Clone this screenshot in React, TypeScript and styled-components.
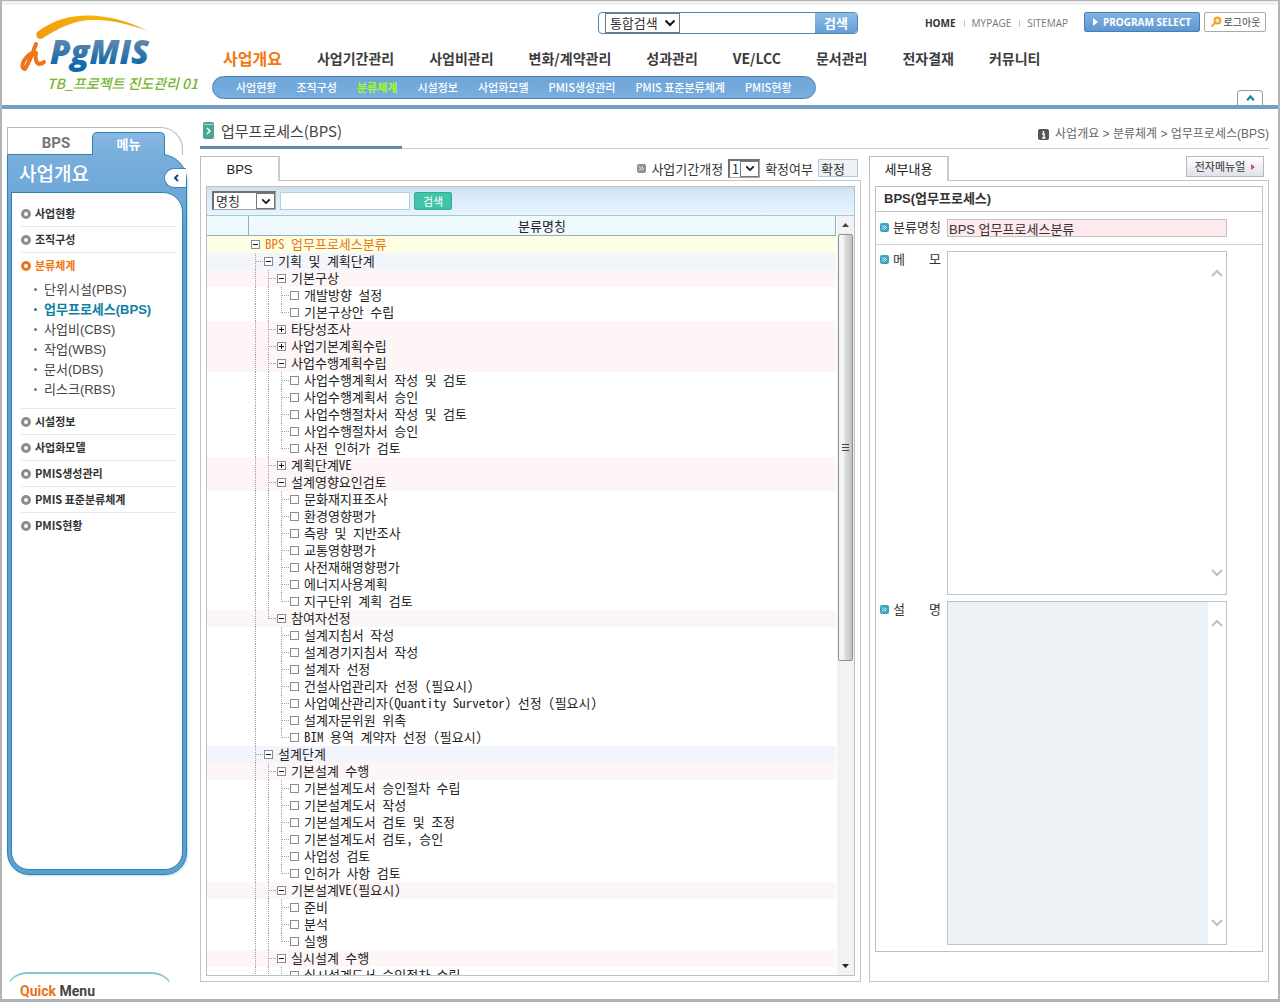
import React from "react";
import styled, { createGlobalStyle, css } from "styled-components";

const gulim = `"Noto Sans Mono CJK KR", "Noto Sans CJK KR", monospace`;
const dotum = `"Liberation Sans", "Noto Sans CJK KR", sans-serif`;
const gothic = `"Noto Sans CJK KR", "Liberation Sans", sans-serif`;

const Global = createGlobalStyle`
  *, *::before, *::after { box-sizing: border-box; }
  body { margin: 0; background: #fff; color: #333; font: 13px/17px ${dotum}; }
  button, input, select, textarea { font: inherit; color: inherit; margin: 0; }
  button { padding: 0; border: 0; background: none; cursor: pointer; }
  a { color: inherit; text-decoration: none; }
  ul, ol { list-style: none; margin: 0; padding: 0; }
  h1, h2, h3, p { margin: 0; font: inherit; }
`;

const Frame = styled.div`
  height: 100vh;
  min-height: 640px;
  display: flex;
  flex-direction: column;
  border: solid #b4b4b4;
  border-width: 1px 2px 3px;
  border-bottom-color: #b0b0b0;
  background: linear-gradient(#f0f0f0 0 4px, #fff 4px);
`;

/* ---------- header ---------- */
const Header = styled.header`
  display: grid;
  grid-template-columns: 210px 1fr;
  border-bottom: 4px solid #739fc6;
`;
const LogoLink = styled.a`
  display: block;
  padding: 11px 0 0 16px;
  svg { display: block; }
`;
const HeaderMain = styled.div`
  display: flex;
  flex-direction: column;
`;
const Utilities = styled.div`
  display: flex;
  justify-content: flex-end;
  align-items: flex-start;
  gap: 4px;
  padding: 11px 12px 0 0;
`;
const SearchForm = styled.form`
  display: flex;
  width: 260px;
  height: 22px;
  margin-right: 63px;
  padding-left: 6px;
  border: 1px solid #4f86b8;
  border-radius: 4px;
  background: #fff;
  overflow: hidden;
`;
const SearchInput = styled.input`
  flex: 1;
  min-width: 0;
  border: 0;
  outline: 0;
  background: transparent;
`;
const SearchButton = styled.button`
  width: 42px;
  background: linear-gradient(#8dbbe6, #659fd5);
  color: #fff;
  font: bold 13px/20px ${gothic};
`;
const SelectBox = styled.span<{ $w: number; $h: number; $tone: "thin" | "sunken" }>`
  display: inline-grid;
  grid-template-columns: 1fr ${(p) => (p.$tone === "thin" ? 18 : 19)}px;
  align-items: stretch;
  width: ${(p) => p.$w}px;
  height: ${(p) => p.$h}px;
  background: #fff;
  border: 1px solid #777;
  ${(p) => p.$tone === "sunken" && css`
    border-width: 2px 1px 1px 2px;
    border-color: #707070 #a8a8a8 #a8a8a8 #707070;
  `}
  select {
    grid-area: 1 / 1 / 2 / 3;
    min-width: 0;
    width: 100%;
    padding: 0 0 0 ${(p) => (p.$tone === "thin" ? 4 : 2)}px;
    appearance: none;
    border: 0;
    outline: 0;
    border-radius: 0;
    background: transparent;
    font: 13px/14px ${gulim};
    color: #333;
  }
  svg {
    grid-area: 1 / 2 / 2 / 3;
    place-self: center;
    pointer-events: none;
  }
`;
const Drop = styled.span`
  grid-area: 1 / 2 / 2 / 3;
  display: grid;
  place-items: center;
  pointer-events: none;
  border: 1px solid #777;
  background: #fff;
  svg { grid-area: auto; }
`;
const UtilLinks = styled.ul`
  display: flex;
  margin-right: 12px;
  font: 10px/22px "Open Sans", sans-serif;
  color: #777;
  li + li::before {
    content: "";
    display: inline-block;
    height: 7px;
    margin: 0 7px 0 8px;
    border-left: 1px solid #ccc;
  }
  li:first-child { font-weight: bold; color: #333; }
`;
const ProgramButton = styled.button`
  display: flex;
  align-items: center;
  justify-content: center;
  gap: 5px;
  width: 116px;
  height: 20px;
  border: 1px solid #4480b8;
  border-radius: 2px;
  background: linear-gradient(#84b2e0, #5f97d0);
  color: #fff;
  font: bold 10px/18px "Open Sans", sans-serif;
  white-space: nowrap;
`;
const LogoutButton = styled.button`
  display: flex;
  align-items: center;
  justify-content: center;
  gap: 2px;
  width: 62px;
  height: 20px;
  border: 1px solid #aaa;
  border-radius: 2px;
  background: #fff;
  color: #444;
  font: 10px/18px ${gothic};
  white-space: nowrap;
`;
const MainNav = styled.ul`
  display: flex;
  align-items: center;
  gap: 35px;
  height: 42px;
  padding: 5px 0 0 11px;
  font: bold 14px/20px ${gothic};
  color: #3c3c3c;
  white-space: nowrap;
  li:first-child { font-size: 16px; color: #f0780f; }
`;
const SubNavRow = styled.div`
  display: flex;
  align-items: flex-end;
  justify-content: space-between;
  height: 29px;
  padding-right: 15px;
`;
const SubNav = styled.ul`
  display: flex;
  gap: 20px;
  height: 23px;
  margin-bottom: 6px;
  padding: 0 23px;
  border: 1px solid #4a82b4;
  border-radius: 12px;
  background: linear-gradient(#6fa5d8, #79aede);
  color: #fff;
  font: 500 11px/21px ${gothic};
  white-space: nowrap;
`;
const SubNavItem = styled.li<{ $on?: boolean }>`
  ${(p) => p.$on && "color: #9cff1c; font-weight: bold;"}
`;
const FoldButton = styled.button`
  display: grid;
  place-items: center;
  width: 26px;
  height: 15px;
  border: 1px solid #999;
  border-bottom: 0;
  border-radius: 4px 4px 0 0;
  background: #fff;
`;

/* ---------- side bar ---------- */
const Body = styled.div`
  flex: 1;
  min-height: 0;
  display: grid;
  grid-template-columns: 198px 1fr;
`;
const Side = styled.aside`
  display: flex;
  flex-direction: column;
  min-height: 0;
  padding: 18px 13px 0 5px;
`;
const SideTabs = styled.div`
  display: flex;
  align-items: flex-end;
  width: 176px;
  height: 28px;
  margin-bottom: -1px;
  border: 1px solid #b9b9b9;
  border-bottom: 0;
  border-radius: 0 22px 0 0;
`;
const SideTab = styled.button<{ $on?: boolean }>`
  height: 23px;
  width: 84px;
  padding: 0 0 0 12px;
  font: bold 15px/23px Roboto, ${gothic};
  color: #777;
  ${(p) => p.$on && css`
    width: 73px;
    padding: 0;
    border: 1px solid #2d82b0;
    border-bottom: 0;
    border-radius: 5px 5px 0 0;
    background: linear-gradient(#88b8e2, #78aeda);
    color: #fff;
    font: bold 13px/20px ${gothic};
    position: relative;
  `}
`;
const SideBox = styled.nav`
  flex: 1;
  min-height: 0;
  display: flex;
  flex-direction: column;
  margin-bottom: 97px;
  border: 1px solid #2d82b0;
  border-radius: 0 26px 22px 22px;
  background: linear-gradient(#78aeda, #6ea8d8 38px, #5ba0d2 80px);
  box-shadow: 1px 1px 2px #c8dcea;
`;
const SideHead = styled.div`
  display: flex;
  align-items: flex-start;
  justify-content: space-between;
  height: 37px;
  padding-left: 11px;
  h2 { color: #fff; font: 500 19px/36px ${gothic}; }
`;
const SideToggle = styled.button`
  display: grid;
  place-items: center;
  width: 22px;
  height: 20px;
  margin-top: 13px;
  border: 1px solid #3d86b4;
  border-right: 0;
  border-radius: 10px 0 0 10px;
  background: #fff;
`;
const SideMenu = styled.ul`
  flex: 1;
  min-height: 0;
  overflow: hidden;
  margin: 0 3px 4px;
  padding: 8px 7px 0 9px;
  border: 1px solid #2d82b0;
  border-radius: 0 20px 18px 18px;
  background: #fff;
`;
const SideItem = styled.li`
  border-bottom: 1px solid #e6e6e6;
  &:last-child { border-bottom: 0; }
`;
const SideLink = styled.a<{ $on?: boolean }>`
  display: flex;
  align-items: center;
  gap: 4px;
  height: 25px;
  color: ${(p) => (p.$on ? "#f0780f" : "#333")};
  font: bold 11px/25px ${gothic};
  white-space: nowrap;
  &::before {
    content: "";
    width: 10px;
    height: 10px;
    border: 3px solid ${(p) => (p.$on ? "#e87722" : "#8c8c8c")};
    border-radius: 50%;
  }
`;
const SideSub = styled.ul`
  padding: 1px 0 9px 13px;
`;
const SideSubItem = styled.li<{ $on?: boolean }>`
  display: flex;
  align-items: center;
  gap: 7px;
  height: 20px;
  white-space: nowrap;
  color: #444;
  ${(p) => p.$on && "color: #0d80a4; font-weight: bold;"}
  &::before {
    content: "";
    width: 3px;
    height: 3px;
    border-radius: 50%;
    background: ${(p) => (p.$on ? "#0d80a4" : "#777")};
  }
`;
const Quick = styled.h2`
  flex: none;
  height: 27px;
  width: 169px;
  margin-left: -2px;
  padding: 7px 0 0 14px;
  border-top: 2px solid #84c4cc;
  border-left: 1px solid transparent;
  border-right: 1px solid transparent;
  border-radius: 22px 22px 0 0;
  font: bold 14px/21px Roboto, sans-serif;
  color: #444;
  em { font-style: normal; color: #ec7014; }
`;

/* ---------- content ---------- */
const Content = styled.main`
  display: flex;
  flex-direction: column;
  min-width: 0;
  min-height: 0;
  padding: 0 9px 17px 0;
`;
const TitleRow = styled.div`
  display: flex;
  justify-content: space-between;
  align-items: stretch;
  height: 40px;
  margin-bottom: 7px;
  box-shadow: inset 0 -1px #ccc;
`;
const Title = styled.h1`
  display: flex;
  align-items: center;
  gap: 7px;
  width: 202px;
  padding: 6px 0 0 3px;
  border-bottom: 3px solid #5f8da6;
  font: 15px/20px ${gothic};
  color: #444;
  white-space: nowrap;
`;
const Crumbs = styled.p`
  display: flex;
  align-items: center;
  gap: 6px;
  padding-top: 10px;
  font-size: 12px;
  color: #666;
  white-space: nowrap;
`;
const Panels = styled.div`
  flex: 1;
  min-height: 0;
  display: grid;
  grid-template-columns: 1fr 400px;
  gap: 8px;
`;
const Panel = styled.section`
  display: flex;
  flex-direction: column;
  min-width: 0;
  min-height: 0;
`;
const TabRow = styled.div`
  display: flex;
  justify-content: space-between;
  align-items: flex-start;
  height: 25px;
  margin-bottom: -1px;
  position: relative;
`;
const Tab = styled.button`
  width: 80px;
  height: 25px;
  border: 1px solid #bbb;
  border-right: 2px solid #ccc;
  border-bottom: 0;
  background: #fff;
  font: 13px/26px ${dotum};
  color: #222;
`;
const PanelBody = styled.div<{ $bottom: number }>`
  flex: 1;
  min-height: 0;
  display: flex;
  flex-direction: column;
  padding: 5px 5px ${(p) => p.$bottom}px;
  border: 1px solid #c4c4c8;
`;
const Controls = styled.div`
  display: flex;
  align-items: center;
  gap: 5px;
  height: 24px;
  padding-right: 3px;
  white-space: nowrap;
  font-family: ${gulim};
`;
const State = styled.input`
  width: 40px;
  height: 18px;
  padding: 0 2px;
  border: 1px solid #b5c8d8;
  border-radius: 0;
  background: #edf2f7;
`;
const ManualButton = styled.button`
  display: flex;
  align-items: center;
  justify-content: center;
  gap: 6px;
  width: 78px;
  height: 21px;
  margin-right: 5px;
  border: 1px solid #b4b8c2;
  background: linear-gradient(#fff, #dfe2ea);
  color: #555;
  font: 500 11px/19px ${gothic};
  white-space: nowrap;
`;
const Box = styled.div`
  flex: 1;
  min-height: 0;
  display: flex;
  flex-direction: column;
  border: 1px solid #b8c0c8;
`;
const Toolbar = styled.form`
  display: flex;
  align-items: center;
  gap: 4px;
  height: 29px;
  padding: 0 0 1px 5px;
  border-bottom: 1px solid #a9c2d4;
  background: linear-gradient(#cfdfec 0 3px, #d3e6f5 3px, #e8f4fd);
`;
const ToolInput = styled.input`
  width: 130px;
  height: 18px;
  border: 1px solid #b5cfe2;
  border-radius: 0;
  background: #fff;
`;
const ToolButton = styled.button`
  width: 38px;
  height: 18px;
  border: 1px solid #2fae93;
  border-radius: 2px;
  background: #43c3a7;
  color: #fff;
  font: 11px/16px ${gothic};
`;
const TreeArea = styled.div`
  flex: 1;
  min-height: 0;
  display: flex;
`;
const TreeScroll = styled.div`
  flex: 1;
  overflow-y: auto;
  scrollbar-width: none;
  margin-right: 1px;
`;
const TreeTable = styled.table`
  width: 100%;
  border-collapse: separate;
  border-spacing: 0;
  table-layout: fixed;
  font: 13px/17px ${gulim};
  color: #222;
  th {
    position: sticky;
    top: 0;
    height: 20px;
    padding: 0;
    border-right: 1px solid #8fb0b8;
    border-bottom: 1px solid #8fb0b8;
    background: linear-gradient(#effbfa, #f0f8ff);
    font-weight: normal;
  }
  th:first-child { width: 42px; }
  td { height: 17px; padding: 0; }
  td + td { padding-left: 2px; }
`;
const rowTone = ["#fdffe3", "#f3f5fd", "#fdf5f6", "#fff"];
const TreeRow = styled.tr<{ $depth: number }>`
  background: ${(p) => rowTone[p.$depth]};
  ${(p) => p.$depth === 0 && "color: #ea7410;"}
`;
const TreeCell = styled.div`
  display: flex;
  align-items: center;
  height: 17px;
  white-space: nowrap;
`;
const NodeName = styled.span`
  padding-bottom: 2px;
`;
const dotsDown = "repeating-linear-gradient(#a0a0a0 0 1px, transparent 1px 2px)";
const dotsAcross = "repeating-linear-gradient(90deg, #a0a0a0 0 1px, transparent 1px 2px)";
const Guide = styled.span<{ $kind: "empty" | "line" | "tee" | "end" }>`
  flex: none;
  width: 13px;
  height: 17px;
  background-repeat: no-repeat;
  ${(p) => p.$kind === "line" && css`
    background-image: ${dotsDown};
    background-size: 1px 100%;
    background-position: 4px 0;
  `}
  ${(p) => (p.$kind === "tee" || p.$kind === "end") && css`
    background-image: ${dotsDown}, ${dotsAcross};
    background-size: 1px ${p.$kind === "tee" ? "17px" : "9px"}, 8px 1px;
    background-position: 4px 0, 5px 8px;
  `}
`;
const Expander = styled.button`
  flex: none;
  display: block;
  width: 9px;
  height: 9px;
  margin-right: 5px;
  svg { display: block; }
`;
const LeafLabel = styled.label`
  display: flex;
  align-items: center;
  gap: 5px;
`;
const LeafCheck = styled.input`
  appearance: none;
  width: 9px;
  height: 9px;
  border: 1px solid #8c8c8c;
  background: #fff;
  &:checked { background: #8c8c8c; }
`;
const ScrollBar = styled.div`
  display: flex;
  flex-direction: column;
  width: 17px;
  padding: 0 1px;
  background: #f2f2f2;
`;
const ScrollArrow = styled.button`
  display: grid;
  place-items: center;
  height: 18px;
`;
const ScrollTrack = styled.div`
  flex: 1;
  min-height: 0;
`;
const ScrollThumb = styled.div`
  display: grid;
  place-items: center;
  height: 59%;
  border: 1px solid #8e8e8e;
  border-radius: 2px;
  background: linear-gradient(90deg, #f6f6f6 30%, #dcdcdc 50%, #c2c2c6);
`;

/* ---------- detail form ---------- */
const DetailTitle = styled.h2`
  height: 25px;
  padding-left: 8px;
  border-bottom: 1px solid #c0c4c8;
  font: bold 13px/24px ${dotum};
  color: #333;
`;
const FieldRow = styled.div<{ $fill?: boolean; $top: number; $line?: boolean }>`
  display: grid;
  grid-template-columns: 67px 1fr;
  min-height: 0;
  padding: ${(p) => p.$top}px 35px 0 4px;
  ${(p) => (p.$fill ? "flex: 1;" : "height: 33px;")}
  ${(p) => p.$line && "border-bottom: 1px solid #ccd0d4;"}
  &:last-child { padding-bottom: 6px; flex: 1 1 6px; }
`;
const FieldLabel = styled.label`
  display: flex;
  align-items: center;
  gap: 4px;
  height: 16px;
  color: #333;
  font-family: ${gulim};
  span {
    width: 48px;
    padding-bottom: 1px;
    text-align: justify;
    text-align-last: justify;
    white-space: nowrap;
  }
`;
const NameInput = styled.input`
  width: 100%;
  height: 18px;
  padding: 0 1px;
  border: 1px solid #c0c0c4;
  border-radius: 0;
  background: #ffe9ec;
`;
const AreaBox = styled.div<{ $shade?: boolean }>`
  display: flex;
  min-height: 0;
  border: 1px solid #b9c3cb;
  textarea {
    flex: 1;
    min-width: 0;
    resize: none;
    border: 0;
    outline: 0;
    scrollbar-width: none;
    background: ${(p) => (p.$shade ? "#edf2f6" : "#fff")};
  }
`;
const AreaScroll = styled.div`
  display: flex;
  flex-direction: column;
  align-items: center;
  justify-content: space-between;
  width: 18px;
  padding: 17px 0;
`;

/* ---------- drawings ---------- */
const Chevron = ({ w = 12, h = 8, d = "M1.5 1.5L6 6L10.5 1.5", c = "#111", s = 2 }) => (
  <svg width={w} height={h} viewBox="0 0 12 8" fill="none" stroke={c} strokeWidth={s} aria-hidden="true">
    <path d={d} />
  </svg>
);
const Marker = ({ c = "#3da3c0" }) => (
  <svg width="9" height="9" viewBox="0 0 9 9" aria-hidden="true">
    <rect width="9" height="9" rx="2" fill={c} />
    <path d="M2 2.5L4 4.5L2 6.5M4.5 2.5L6.5 4.5L4.5 6.5" fill="none" stroke="#fff" />
  </svg>
);
const Logo = () => (
  <svg width="184" height="82" viewBox="0 0 184 82" role="img" aria-label="PgMIS">
    <defs>
      <linearGradient id="blue" x1="0" y1="0" x2="0" y2="1">
        <stop offset="0.25" stopColor="#5f86ad" />
        <stop offset="0.8" stopColor="#0f6aa8" />
      </linearGradient>
      <linearGradient id="sun" x1="0" y1="0" x2="1" y2="0">
        <stop offset="0" stopColor="#f49a10" />
        <stop offset="0.5" stopColor="#f6b40a" />
        <stop offset="1" stopColor="#e8a01c" />
      </linearGradient>
    </defs>
    <path d="M19 20C38 6 58 2 80 4C100 6 116 12 130 19C114 13 98 9 80 8C58 7 42 15 25 26C20 29 17 24 19 20Z" fill="url(#sun)" />
    <path d="M18 32C15 40 12 49 7 57C3 56 4 50 8 46C11 42 15 40 18 41C17 46 18 51 21 52C23 52 25 51 26 50" fill="none" stroke="#f0741a" strokeWidth="4" strokeLinecap="round" strokeLinejoin="round" />
    <text x="32" y="52" fontFamily="Open Sans" fontWeight="800" fontStyle="italic" fontSize="33" fill="url(#blue)">PgMIS</text>
    <text x="29" y="77" fontFamily="Noto Sans CJK KR" fontWeight="500" fontStyle="italic" fontSize="14" fill="#76b52e">TB_프로젝트 진도관리 01</text>
  </svg>
);

/* ---------- data ---------- */
type Node = { t: string; closed?: boolean; more?: boolean; kids?: Node[] };
const leafs = (...names: string[]): Node[] => names.map((t) => ({ t }));

const tree: Node = {
  t: "BPS 업무프로세스분류",
  kids: [
    {
      t: "기획 및 계획단계",
      kids: [
        { t: "기본구상", kids: leafs("개발방향 설정", "기본구상안 수립") },
        { t: "타당성조사", closed: true },
        { t: "사업기본계획수립", closed: true },
        {
          t: "사업수행계획수립",
          kids: leafs("사업수행계획서 작성 및 검토", "사업수행계획서 승인", "사업수행절차서 작성 및 검토", "사업수행절차서 승인", "사전 인허가 검토"),
        },
        { t: "계획단계VE", closed: true },
        {
          t: "설계영향요인검토",
          kids: leafs("문화재지표조사", "환경영향평가", "측량 및 지반조사", "교통영향평가", "사전재해영향평가", "에너지사용계획", "지구단위 계획 검토"),
        },
        {
          t: "참여자선정",
          kids: leafs("설계지침서 작성", "설계경기지침서 작성", "설계자 선정", "건설사업관리자 선정 (필요시)", "사업예산관리자(Quantity Survetor) 선정 (필요시)", "설계자문위원 위촉", "BIM 용역 계약자 선정 (필요시)"),
        },
      ],
    },
    {
      t: "설계단계",
      more: true,
      kids: [
        {
          t: "기본설계 수행",
          kids: leafs("기본설계도서 승인절차 수립", "기본설계도서 작성", "기본설계도서 검토 및 조정", "기본설계도서 검토, 승인", "사업성 검토", "인허가 사항 검토"),
        },
        { t: "기본설계VE(필요시)", kids: leafs("준비", "분석", "실행") },
        { t: "실시설계 수행", more: true, kids: [{ t: "실시설계도서 승인절차 수립", more: true }] },
      ],
    },
  ],
};

type Row = { node: Node; depth: number; lasts: boolean[] };
const flatten = (node: Node, depth = 0, lasts: boolean[] = []): Row[] => [
  { node, depth, lasts },
  ...(node.kids ?? []).flatMap((k, i, all) =>
    flatten(k, depth + 1, [...lasts, i === all.length - 1 && !k.more])
  ),
];
const rows = flatten(tree);

const guideKind = (lasts: boolean[], i: number) => {
  if (i === lasts.length - 1) return lasts[i] ? "end" : "tee";
  return lasts[i] ? "empty" : "line";
};

const mainMenu = ["사업개요", "사업기간관리", "사업비관리", "변화/계약관리", "성과관리", "VE/LCC", "문서관리", "전자결재", "커뮤니티"];
const subMenu = ["사업현황", "조직구성", "분류체계", "시설정보", "사업화모델", "PMIS생성관리", "PMIS 표준분류체계", "PMIS현황"];
const classes = ["단위시설(PBS)", "업무프로세스(BPS)", "사업비(CBS)", "작업(WBS)", "문서(DBS)", "리스크(RBS)"];

const TextBox = ({ id, shade }: { id: string; shade?: boolean }) => (
  <AreaBox $shade={shade}>
    <textarea id={id} readOnly={shade} />
    <AreaScroll>
      <Chevron c="#c0c0c0" d="M1 7L6 2L11 7" />
      <Chevron c="#c0c0c0" d="M1 1L6 6L11 1" />
    </AreaScroll>
  </AreaBox>
);

export default function App() {
  return (
    <Frame>
      <Global />
      <Header>
        <LogoLink href="#"><Logo /></LogoLink>
        <HeaderMain>
          <Utilities>
            <SearchForm>
              <SelectBox $w={75} $h={20} $tone="thin">
                <select aria-label="검색 범위"><option>통합검색</option></select>
                <Chevron />
              </SelectBox>
              <SearchInput aria-label="검색어" />
              <SearchButton type="button">검색</SearchButton>
            </SearchForm>
            <UtilLinks>
              <li><a href="#">HOME</a></li>
              <li><a href="#">MYPAGE</a></li>
              <li><a href="#">SITEMAP</a></li>
            </UtilLinks>
            <ProgramButton>
              <svg width="5" height="8" viewBox="0 0 5 8" aria-hidden="true"><path d="M0 0L5 4L0 8Z" fill="#fff" /></svg>
              PROGRAM SELECT
            </ProgramButton>
            <LogoutButton>
              <svg width="12" height="12" viewBox="0 0 12 12" fill="none" aria-hidden="true">
                <circle cx="7.5" cy="4.5" r="3" fill="#fbe3a8" stroke="#eaa52e" strokeWidth="2" />
                <path d="M5.5 6.5L1.5 10.5" stroke="#eaa52e" strokeWidth="2" />
              </svg>
              로그아웃
            </LogoutButton>
          </Utilities>
          <nav>
            <MainNav>
              {mainMenu.map((m) => <li key={m}><a href="#">{m}</a></li>)}
            </MainNav>
          </nav>
          <SubNavRow>
            <SubNav>
              {subMenu.map((m) => (
                <SubNavItem key={m} $on={m === "분류체계"}><a href="#">{m}</a></SubNavItem>
              ))}
            </SubNav>
            <FoldButton aria-label="접기"><Chevron w={9} h={6} c="#0d8a94" d="M1.5 7L6 2L10.5 7" s={3} /></FoldButton>
          </SubNavRow>
        </HeaderMain>
      </Header>

      <Body>
        <Side>
          <SideTabs>
            <SideTab>BPS</SideTab>
            <SideTab $on>메뉴</SideTab>
          </SideTabs>
          <SideBox>
            <SideHead>
              <h2>사업개요</h2>
              <SideToggle aria-label="메뉴 닫기">
                <svg width="6" height="8" viewBox="0 0 6 8" fill="none" stroke="#0b4f86" strokeWidth="2" aria-hidden="true"><path d="M5 1L2 4L5 7" /></svg>
              </SideToggle>
            </SideHead>
            <SideMenu>
              {subMenu.map((m) => (
                <SideItem key={m}>
                  <SideLink href="#" $on={m === "분류체계"}>{m}</SideLink>
                  {m === "분류체계" && (
                    <SideSub>
                      {classes.map((c) => (
                        <SideSubItem key={c} $on={c === "업무프로세스(BPS)"}><a href="#">{c}</a></SideSubItem>
                      ))}
                    </SideSub>
                  )}
                </SideItem>
              ))}
            </SideMenu>
          </SideBox>
          <Quick><em>Quick</em> Menu</Quick>
        </Side>

        <Content>
          <TitleRow>
            <Title>
              <svg width="11" height="17" viewBox="0 0 11 17" aria-hidden="true">
                <rect width="11" height="17" rx="2" fill="#4aa596" />
                <path d="M1 2.500H10" stroke="#a8d8d0" />
                <path d="M4 6L7 9L4 12" fill="none" stroke="#fff" strokeWidth="1.500" />
              </svg>
              업무프로세스(BPS)
            </Title>
            <Crumbs>
              <svg width="11" height="11" viewBox="0 0 11 11" aria-hidden="true">
                <rect width="11" height="11" rx="2" fill="#555" />
                <path d="M5.500 2V4M4 5H6V8.500M4 9H7.500" fill="none" stroke="#fff" strokeWidth="1.500" />
              </svg>
              사업개요 &gt; 분류체계 &gt; 업무프로세스(BPS)
            </Crumbs>
          </TitleRow>

          <Panels>
            <Panel>
              <TabRow>
                <Tab>BPS</Tab>
                <Controls>
                  <Marker c="#8e8e8e" />
                  <label htmlFor="revision">사업기간개정</label>
                  <SelectBox $w={32} $h={19} $tone="sunken">
                    <select id="revision"><option>1</option></select>
                    <Drop><Chevron w={10} h={7} /></Drop>
                  </SelectBox>
                  <label htmlFor="state">확정여부</label>
                  <State id="state" defaultValue="확정" readOnly />
                </Controls>
              </TabRow>
              <PanelBody $bottom={5}>
                <Box>
                  <Toolbar>
                    <SelectBox $w={64} $h={19} $tone="sunken">
                      <select aria-label="검색 조건"><option>명칭</option></select>
                      <Drop><Chevron w={10} h={7} /></Drop>
                    </SelectBox>
                    <ToolInput aria-label="명칭 검색어" />
                    <ToolButton type="button">검색</ToolButton>
                  </Toolbar>
                  <TreeArea>
                    <TreeScroll>
                      <TreeTable>
                        <thead>
                          <tr><th /><th scope="col">분류명칭</th></tr>
                        </thead>
                        <tbody>
                          {rows.map(({ node, depth, lasts }) => (
                            <TreeRow key={node.t} $depth={depth}>
                              <td />
                              <td>
                                <TreeCell>
                                  {lasts.map((_, i) => <Guide key={i} $kind={guideKind(lasts, i)} />)}
                                  {depth === 3 ? (
                                    <LeafLabel>
                                      <LeafCheck type="checkbox" />
                                      <NodeName>{node.t}</NodeName>
                                    </LeafLabel>
                                  ) : (
                                    <>
                                      <Expander aria-expanded={!node.closed} aria-label={node.t}>
                                        <svg width="9" height="9" viewBox="0 0 9 9" shapeRendering="crispEdges" aria-hidden="true">
                                          <rect x="0.5" y="0.5" width="8" height="8" fill="#fff" stroke="#8c8c8c" />
                                          <path d={node.closed ? "M2 4.5H7M4.5 2V7" : "M2 4.5H7"} stroke="#111" />
                                        </svg>
                                      </Expander>
                                      <NodeName>{node.t}</NodeName>
                                    </>
                                  )}
                                </TreeCell>
                              </td>
                            </TreeRow>
                          ))}
                        </tbody>
                      </TreeTable>
                    </TreeScroll>
                    <ScrollBar>
                      <ScrollArrow aria-label="위로">
                        <svg width="7" height="4" viewBox="0 0 7 4" aria-hidden="true"><path d="M0 4L3.500 0L7 4Z" fill="#444" /></svg>
                      </ScrollArrow>
                      <ScrollTrack>
                        <ScrollThumb>
                          <svg width="7" height="8" viewBox="0 0 7 8" stroke="#444" shapeRendering="crispEdges" aria-hidden="true"><path d="M0 1.500H7M0 4.500H7M0 7.500H7" /></svg>
                        </ScrollThumb>
                      </ScrollTrack>
                      <ScrollArrow aria-label="아래로">
                        <svg width="7" height="4" viewBox="0 0 7 4" aria-hidden="true"><path d="M0 0L3.500 4L7 0Z" fill="#222" /></svg>
                      </ScrollArrow>
                    </ScrollBar>
                  </TreeArea>
                </Box>
              </PanelBody>
            </Panel>

            <Panel>
              <TabRow>
                <Tab>세부내용</Tab>
                <ManualButton>
                  전자메뉴얼
                  <svg width="4" height="6" viewBox="0 0 4 6" aria-hidden="true"><path d="M0 0L4 3L0 6Z" fill="#e0455a" /></svg>
                </ManualButton>
              </TabRow>
              <PanelBody $bottom={29}>
                <Box>
                  <DetailTitle>BPS(업무프로세스)</DetailTitle>
                  <FieldRow $top={7} $line>
                    <FieldLabel htmlFor="name"><Marker /><span>분류명칭</span></FieldLabel>
                    <NameInput id="name" defaultValue="BPS 업무프로세스분류" />
                  </FieldRow>
                  <FieldRow $top={6} $fill>
                    <FieldLabel htmlFor="memo"><Marker /><span>메 모</span></FieldLabel>
                    <TextBox id="memo" />
                  </FieldRow>
                  <FieldRow $top={6} $fill>
                    <FieldLabel htmlFor="desc"><Marker /><span>설 명</span></FieldLabel>
                    <TextBox id="desc" shade />
                  </FieldRow>
                </Box>
              </PanelBody>
            </Panel>
          </Panels>
        </Content>
      </Body>
    </Frame>
  );
}
